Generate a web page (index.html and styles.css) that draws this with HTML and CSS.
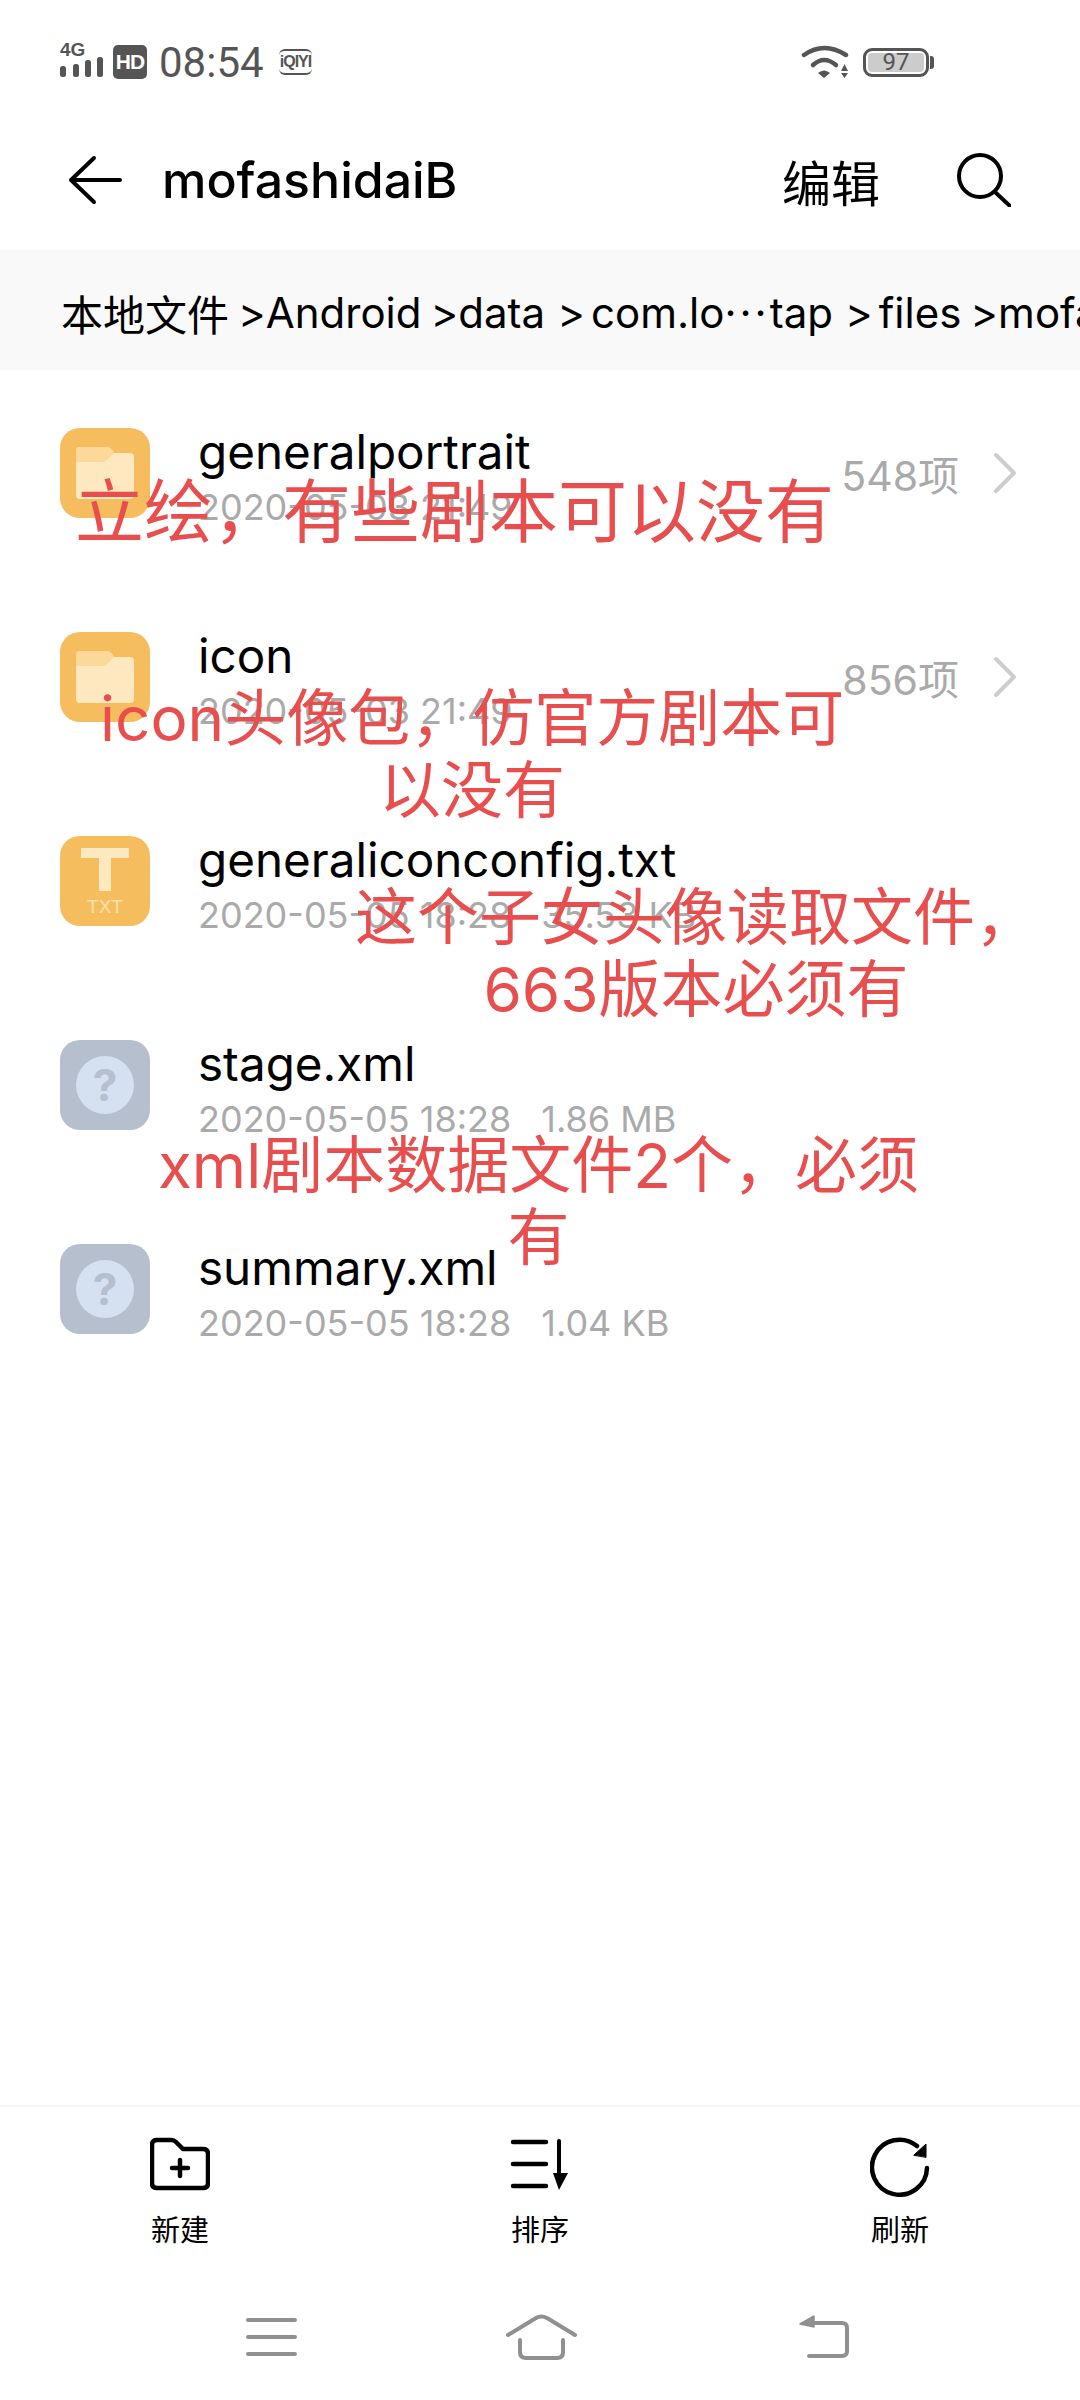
FILE: index.html
```html
<!DOCTYPE html>
<html lang="zh-CN">
<head>
  <meta charset="UTF-8">
  <meta name="viewport" content="width=device-width, initial-scale=1.0">
  <title>mofashidaiB</title>
  <link rel="stylesheet" href="styles.css">
</head>
<body>
  <div class="screen">

    <div class="status">
      <svg class="sig" width="44" height="38" viewBox="0 0 44 38">
        <text x="0" y="16" class="sig-text">4G</text>
        <rect x="0" y="26" width="6" height="11" rx="2.5"/>
        <rect x="13" y="24" width="6" height="13" rx="2.5"/>
        <rect x="25" y="20" width="6" height="17" rx="2.5"/>
        <rect x="37" y="17" width="6" height="20" rx="2.5"/>
      </svg>
      <span class="hd">HD</span>
      <span class="time">08:54</span>
      <span class="iqiyi">iQIYI</span>
      <svg class="wifi" width="48" height="34" viewBox="0 0 48 34" fill="none" stroke="#555" stroke-width="4.500" stroke-linecap="round">
        <path d="M3 10Q23 -4 45 10"/>
        <path d="M12 20Q23 10 35 20"/>
        <path d="M17 28Q23 23 29 28L23 33Z" fill="#555" stroke="none"/>
        <path d="M43.500 19L47 26H40ZM40 28H47L43.500 33Z" fill="#555" stroke="none"/>
      </svg>
      <div class="battery"><span class="battery-num">97</span></div>
    </div>

    <div class="header">
      <svg class="back" width="54" height="50" viewBox="0 0 54 50" fill="none" stroke="#000" stroke-width="4" stroke-linecap="round" stroke-linejoin="round">
        <path d="M26 3L3 25L26 47M3 25H52"/>
      </svg>
      <div class="title">mofashidaiB</div>
      <div class="edit">编辑</div>
      <svg class="search" width="54" height="54" viewBox="0 0 54 54" fill="none" stroke="#000" stroke-width="4" stroke-linecap="round">
        <circle cx="23" cy="23" r="21"/>
        <path d="M38 39L53 53"/>
      </svg>
    </div>

    <div class="crumbs">
      <span>本地文件</span><span class="sep">&gt;</span><span>Android</span><span class="sep">&gt;</span><span>data</span><span class="sep sep-wide">&gt;</span><span>com.lo<span class="dots">···</span>tap</span><span class="sep sep-wide">&gt;</span><span>files</span><span class="sep">&gt;</span><span>mofashidaiB</span>
    </div>

    <div class="list">
      <div class="row">
        <div class="icon icon-orange">
          <svg width="58" height="52" viewBox="0 0 58 52"><path d="M4 0H30Q34 0 36 3L38 6H54Q58 6 58 10V48Q58 52 54 52H4Q0 52 0 48V4Q0 0 4 0Z" fill="#fde8c0"/><path d="M4 0H30Q34 0 36 3L38 6L32 12Q30 15 26 15H0V4Q0 0 4 0Z" fill="#fcd998"/></svg>
        </div>
        <div class="info">
          <div class="name">generalportrait</div>
          <div class="meta">2020-05-03 21:49</div>
        </div>
        <div class="count">548项</div>
        <svg class="chev" width="26" height="42" viewBox="0 0 26 42" fill="none" stroke="#cdcdcd" stroke-width="4" stroke-linecap="round" stroke-linejoin="round"><path d="M5 3L23 21L5 39"/></svg>
      </div>

      <div class="row">
        <div class="icon icon-orange">
          <svg width="58" height="52" viewBox="0 0 58 52"><path d="M4 0H30Q34 0 36 3L38 6H54Q58 6 58 10V48Q58 52 54 52H4Q0 52 0 48V4Q0 0 4 0Z" fill="#fde8c0"/><path d="M4 0H30Q34 0 36 3L38 6L32 12Q30 15 26 15H0V4Q0 0 4 0Z" fill="#fcd998"/></svg>
        </div>
        <div class="info">
          <div class="name">icon</div>
          <div class="meta">2020-05-03 21:49</div>
        </div>
        <div class="count">856项</div>
        <svg class="chev" width="26" height="42" viewBox="0 0 26 42" fill="none" stroke="#cdcdcd" stroke-width="4" stroke-linecap="round" stroke-linejoin="round"><path d="M5 3L23 21L5 39"/></svg>
      </div>

      <div class="row">
        <div class="icon icon-orange icon-txt">
          <span class="txt-t"></span>
          <span class="txt-label">TXT</span>
        </div>
        <div class="info">
          <div class="name">generaliconconfig.txt</div>
          <div class="meta">2020-05-05 18:28<span class="size">35.53 KB</span></div>
        </div>
      </div>

      <div class="row">
        <div class="icon icon-grey"><span class="unknown">?</span></div>
        <div class="info">
          <div class="name">stage.xml</div>
          <div class="meta">2020-05-05 18:28<span class="size">1.86 MB</span></div>
        </div>
      </div>

      <div class="row">
        <div class="icon icon-grey"><span class="unknown">?</span></div>
        <div class="info">
          <div class="name">summary.xml</div>
          <div class="meta">2020-05-05 18:28<span class="size">1.04 KB</span></div>
        </div>
      </div>
    </div>

    <div class="toolbar">
      <div class="tool">
        <svg width="60" height="56" viewBox="0 0 60 56" fill="none" stroke="#000" stroke-width="4.5" stroke-linecap="round" stroke-linejoin="round">
          <path d="M2 8Q2 3 7 3H21Q24 3 26 5L33 12H53Q58 12 58 17V46Q58 51 53 51H7Q2 51 2 46Z"/>
          <path d="M22 31H38M30 23V39"/>
        </svg>
        <span>新建</span>
      </div>
      <div class="tool">
        <svg width="60" height="56" viewBox="0 0 60 56" fill="none" stroke="#000" stroke-width="4.5" stroke-linecap="round">
          <path d="M3 5H36M3 27H36M3 49H36"/>
          <path d="M49 4V46" stroke-width="4"/>
          <path d="M43 36H58L49 53Z" fill="#000" stroke="none"/>
        </svg>
        <span>排序</span>
      </div>
      <div class="tool">
        <svg width="60" height="60" viewBox="0 0 60 60" fill="none" stroke="#000" stroke-width="4.5" stroke-linecap="round">
          <path d="M57 31A27.500 27.500 0 1 1 47 9"/>
          <path d="M44 18L56 7L56 20Z" fill="#000" stroke="#000" stroke-width="1"/>
        </svg>
        <span>刷新</span>
      </div>
    </div>

    <div class="nav">
      <svg class="nav-menu" width="51" height="40" viewBox="0 0 51 40" fill="none" stroke="#909090" stroke-width="4" stroke-linecap="round">
        <path d="M2 3H49M2 20H49M2 37H49"/>
      </svg>
      <svg class="nav-home" width="71" height="46" viewBox="0 0 71 46" fill="none" stroke="#909090" stroke-width="4" stroke-linecap="round" stroke-linejoin="round">
        <path d="M2 21L30 4Q35 1 41 4L69 21"/>
        <path d="M14 26V38Q14 44 20 44H51Q57 44 57 38V26"/>
      </svg>
      <svg width="50" height="44" viewBox="0 0 50 44" fill="none" stroke="#909090" stroke-width="4" stroke-linecap="round" stroke-linejoin="round">
        <path d="M16 8H43Q48 8 48 13V36Q48 41 43 41H10"/>
        <path d="M1 9L15 1V12Z" fill="#909090" stroke-width="1.500"/>
      </svg>
    </div>

    <div class="note note-a">立绘，有些剧本可以没有</div>
    <div class="note note-b">icon头像包，仿官方剧本可<br>以没有</div>
    <div class="note note-c">这个子女头像读取文件，<br>663版本必须有</div>
    <div class="note note-d">xml剧本数据文件2个，必须<br>有</div>
  </div>
</body>
</html>
```

FILE: styles.css
```css
* {
  box-sizing: border-box;
}
body {
  margin: 0;
  background-color: #ffffff;
  font-family: Inter, "Noto Sans CJK SC", sans-serif;
}
.screen {
  position: relative;
  width: 1080px;
  height: 2400px;
  display: flex;
  flex-direction: column;
  overflow: hidden;
}

/* status bar */
.status {
  height: 124px;
  flex: none;
  display: flex;
  align-items: center;
  padding: 0 151px 0 60px;
  color: #555555;
}
.sig {
  fill: #555555;
  margin: 0 9px 6px 0;
}
.sig-text {
  font-size: 19px;
  font-weight: 700;
  font-family: "Liberation Sans", sans-serif;
}
.hd {
  width: 34px;
  height: 34px;
  border-radius: 5px;
  background-color: #555555;
  color: #ffffff;
  font-family: "Liberation Sans", sans-serif;
  font-size: 21px;
  font-weight: 700;
  line-height: 34px;
  text-align: center;
  letter-spacing: -1px;
  margin-right: 12px;
}
.time {
  font-family: Roboto, sans-serif;
  font-size: 42px;
  width: 120px;
  white-space: nowrap;
}
.iqiyi {
  width: 33px;
  height: 26px;
  border-top: 2px solid #555555;
  border-bottom: 2px solid #555555;
  border-radius: 6px;
  font-size: 16px;
  font-weight: 700;
  line-height: 22px;
  text-align: center;
  letter-spacing: -1px;
  font-family: "Liberation Sans", sans-serif;
  overflow: hidden;
}
.wifi {
  margin-left: auto;
  margin-right: 14px;
}
.battery {
  position: relative;
  width: 66px;
  height: 29px;
  border: 3px solid #555555;
  border-radius: 9px;
  background-color: #cccccc;
  box-shadow: inset 0 0 0 2px #ffffff;
  font-family: Roboto, sans-serif;
  font-size: 24px;
  line-height: 23px;
  text-align: center;
}
.battery::after {
  content: "";
  position: absolute;
  right: -8px;
  top: 5px;
  width: 4px;
  height: 13px;
  border-radius: 0 3px 3px 0;
  background-color: #555555;
}

/* header */
.header {
  height: 126px;
  flex: none;
  display: flex;
  align-items: center;
  padding: 0 69px 14px 68px;
  color: #000000;
}
.back {
  margin-right: 40px;
}
.title {
  font-size: 50px;
  font-weight: 500;
}
.edit {
  margin-left: auto;
  font-size: 49px;
  margin-right: 77px;
}

/* path */
.crumbs {
  height: 120px;
  flex: none;
  display: flex;
  align-items: center;
  padding: 5px 0 0 61px;
  background-color: #f9f9f9;
  font-size: 42px;
  white-space: nowrap;
  overflow: hidden;
}
.sep {
  margin: 0 0 0 9px;
}
.sep-wide {
  margin: 0 6px 0 12px;
}
.dots {
  letter-spacing: 3px;
}

/* files */
.list {
  flex: 1;
  display: flex;
  flex-direction: column;
  gap: 114px;
  padding: 58px 60px 0;
}
.row {
  height: 90px;
  display: flex;
  align-items: center;
}
.icon {
  width: 90px;
  height: 90px;
  flex: none;
  border-radius: 20px;
  display: flex;
  align-items: center;
  justify-content: center;
}
.icon-orange {
  background-color: #f6bd5f;
}
.icon-grey {
  background-color: #b5bfce;
}
.icon-txt {
  flex-direction: column;
  justify-content: flex-start;
}
/* the T of the text file icon: stem plus top bar */
.txt-t {
  position: relative;
  width: 12px;
  height: 43px;
  margin-top: 12px;
  background-color: #fde8c0;
}
.txt-t::before {
  content: "";
  position: absolute;
  left: -18px;
  top: 0;
  width: 48px;
  height: 10px;
  background-color: #fde8c0;
}
.txt-label {
  font-family: "Liberation Sans", sans-serif;
  font-size: 19px;
  line-height: 22px;
  margin-top: 5px;
  color: #fde1ae;
}
.unknown {
  width: 58px;
  height: 58px;
  border-radius: 50%;
  background-color: #d5e0f0;
  color: #b5bfce;
  font-size: 44px;
  font-weight: 700;
  line-height: 58px;
  text-align: center;
}
.info {
  flex: 1;
  min-width: 0;
  margin-left: 48px;
  padding-top: 8px;
  white-space: nowrap;
}
.name {
  font-size: 47.600px;
  line-height: 60px;
  color: #000000;
}
.meta {
  font-size: 36px;
  line-height: 50px;
  color: #aaaaaa;
}
.size {
  margin-left: 30px;
}
.count {
  font-size: 41px;
  color: #aaaaaa;
  margin-right: 32px;
}
.chev {
  margin-right: 3px;
}

/* bottom */
.toolbar {
  height: 185px;
  flex: none;
  display: grid;
  grid-template-columns: repeat(3, 1fr);
  border-top: 2px solid #f6f6f6;
  padding-top: 30px;
}
.tool {
  display: flex;
  flex-direction: column;
  align-items: center;
  height: 112px;
  justify-content: space-between;
  font-size: 29px;
  color: #000000;
}
.nav {
  height: 110px;
  flex: none;
  display: flex;
  align-items: center;
  padding: 0 0 16px 246px;
}
.nav-home {
  margin: 0 222px 0 209px;
}

/* red notes typed over the screenshot */
.note {
  position: absolute;
  font-size: 62px;
  line-height: 72px;
  color: #e94e4e;
  text-align: center;
  white-space: nowrap;
}
.note-a {
  left: 75px;
  top: 476px;
  font-size: 69px;
}
.note-b {
  left: 100px;
  top: 683px;
}
.note-c {
  left: 355px;
  top: 882px;
}
.note-d {
  left: 158px;
  top: 1130px;
}
```
